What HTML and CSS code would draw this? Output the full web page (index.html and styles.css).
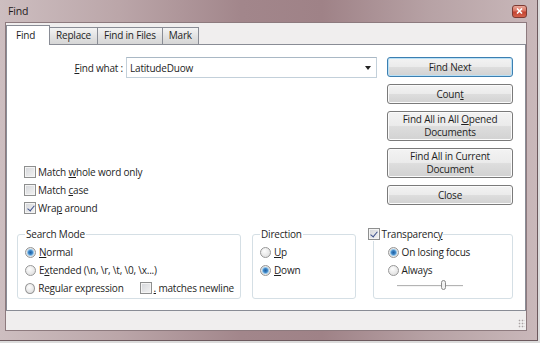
FILE: index.html
```html
<!DOCTYPE html>
<html lang="en">
<head>
  <meta charset="UTF-8">
  <title>Find</title>
  <link rel="stylesheet" href="styles.css">
</head>
<body>
  <div class="window">

    <!-- TITLE BAR -->
    <div class="titlebar">
      <span class="title">Find</span>
      <span class="close">
        <svg width="7" height="6" viewBox="0 0 7 6"><path d="M1 0.5 L6 5.5 M6 0.5 L1 5.5" stroke="#fff" stroke-width="1.6"/></svg>
      </span>
    </div>

    <div class="client">
      <!-- TABS -->
      <div class="tabs">
        <div class="tab active">Find</div>
        <div class="tab">Replace</div>
        <div class="tab">Find in Files</div>
        <div class="tab">Mark</div>
      </div>

      <div class="panel">
        <div class="top">
          <div class="main">
            <div class="find-row">
              <label class="find-label"><u>F</u>ind what :</label>
              <div class="combo"><span>LatitudeDuow</span><span class="arrow"></span></div>
            </div>
            <div class="options">
              <div class="check"><span class="box"></span><span>Match <u>w</u>hole word only</span></div>
              <div class="check"><span class="box"></span><span>Match <u>c</u>ase</span></div>
              <div class="check"><span class="box on"></span><span>Wra<u>p</u> around</span></div>
            </div>
          </div>
          <div class="buttons">
            <div class="btn default"><span>Find Next</span></div>
            <div class="btn"><span>Coun<u>t</u></span></div>
            <div class="btn tall"><span>Find All in All <u>O</u>pened<br>Documents</span></div>
            <div class="btn tall"><span>Find All in Current<br>Document</span></div>
            <div class="btn"><span>Close</span></div>
          </div>
        </div>

        <div class="groups">
          <fieldset class="group search-mode">
            <legend>Search Mode</legend>
            <div class="radio"><span class="dot on"></span><span><u>N</u>ormal</span></div>
            <div class="radio"><span class="dot"></span><span>E<u>x</u>tended (\n, \r, \t, \0, \x...)</span></div>
            <div class="radio">
              <span class="dot"></span><span>Re<u>g</u>ular expression</span>
              <span class="check newline"><span class="box"></span><span><u>.</u> matches newline</span></span>
            </div>
          </fieldset>

          <fieldset class="group direction">
            <legend>Direction</legend>
            <div class="radio"><span class="dot"></span><span><u>U</u>p</span></div>
            <div class="radio"><span class="dot on"></span><span><u>D</u>own</span></div>
          </fieldset>

          <fieldset class="group transparency">
            <legend><span class="check"><span class="box on"></span><span>Transparenc<u>y</u></span></span></legend>
            <div class="radio"><span class="dot on"></span><span>On losing focus</span></div>
            <div class="radio"><span class="dot"></span><span>Always</span></div>
            <div class="slider">
              <svg width="70" height="12" viewBox="0 0 70 12">
                <line x1="0" y1="6.5" x2="66" y2="6.5" stroke="#b4b4b4" stroke-width="1"/>
                <line x1="0" y1="7.5" x2="66" y2="7.5" stroke="#f4f4f4" stroke-width="1"/>
                <rect x="44.5" y="1.5" width="4" height="9" rx="2" fill="#f2f2f2" stroke="#8a8a8a"/>
              </svg>
            </div>
          </fieldset>
        </div>
      </div>

      <div class="statusbar"><span class="grip"></span></div>
    </div>
  </div>
</body>
</html>
```

FILE: styles.css
```css
* {
  margin: 0;
  padding: 0;
  box-sizing: border-box;
}
body {
  width: 540px;
  height: 343px;
  overflow: hidden;
  background: #dcdcdc;
  font-family: 'Open Sans', sans-serif;
  font-size: 10px;
  letter-spacing: -0.2px;
  color: #1e1e1e;
}
u {
  text-decoration: underline;
  text-underline-offset: 1px;
}

/* ===== WINDOW FRAME ===== */
.window {
  width: 538px;
  height: 341px;
  display: flex;
  flex-direction: column;
  padding: 0 10px 9px 5px;
  background: linear-gradient(90deg, #cdbec0 0%, #bba6a9 22%, #a2868b 45%, #9f8287 60%, #b7a2a5 80%, #c9b8ba 100%);
  border-right: 1px solid #6d5a5e;
  border-bottom: 1px solid #6d5a5e;
}
.titlebar {
  height: 22px;
  display: flex;
  align-items: center;
  justify-content: space-between;
  padding: 0 0 0 3px;
}
.title {
  font-size: 10.5px;
  color: #1f1a1b;
}
.close {
  width: 15px;
  height: 13px;
  display: flex;
  align-items: center;
  justify-content: center;
  border: 1px solid #7d3a33;
  border-radius: 3px;
  background: linear-gradient(#eaa99b 0%, #d9705f 45%, #c2412f 55%, #d4624c 100%);
}

/* ===== CLIENT AREA ===== */
.client {
  flex: 1;
  display: flex;
  flex-direction: column;
  background: #f0eeee;
  border: 1px solid #8d7a7e;
}
.tabs {
  height: 21px;
  display: flex;
  align-items: flex-end;
}
.tab {
  height: 17px;
  padding: 0 6px;
  line-height: 15px;
  border: 1px solid #898c95;
  border-bottom: none;
  border-left: none;
  background: linear-gradient(#f4f4f4, #e3e3e3 50%, #d6d6d6);
}
.tab.active {
  height: 20px;
  width: 44px;
  line-height: 18px;
  padding: 0 0 0 9px;
  margin-bottom: -1px;
  border-left: 1px solid #898c95;
  background: #fff;
  position: relative;
}
.panel {
  height: 267px;
  background: #fff;
  border: 1px solid #898c95;
  padding: 12px 12px 10px 10px;
  display: flex;
  flex-direction: column;
}
.statusbar {
  flex: 1;
  display: flex;
  justify-content: flex-end;
  align-items: flex-end;
  padding: 0 1px 2px 0;
}
.grip {
  width: 7px;
  height: 9px;
  background-image: radial-gradient(circle, #a9a3a4 0.7px, transparent 1.1px);
  background-size: 3px 3px;
}

/* ===== TOP SECTION ===== */
.top {
  height: 160px;
  display: flex;
  gap: 10px;
}
.main {
  flex: 1;
  display: flex;
  flex-direction: column;
  justify-content: space-between;
}
.find-row {
  height: 21px;
  display: flex;
  align-items: center;
  gap: 3px;
}
.find-label {
  width: 106px;
  text-align: right;
}
.combo {
  flex: 1;
  height: 21px;
  display: flex;
  align-items: center;
  justify-content: space-between;
  padding: 0 5px 0 3px;
  border: 1px solid #c3d0da;
  border-top-color: #a9b8c5;
}
.arrow {
  border-left: 3px solid transparent;
  border-right: 3px solid transparent;
  border-top: 4px solid #222;
}
.options {
  padding-left: 7px;
}
.check, .radio {
  height: 18px;
  display: flex;
  align-items: center;
  gap: 2px;
  white-space: nowrap;
}
.box {
  width: 12px;
  height: 12px;
  border: 1px solid #8e8f8f;
  background: linear-gradient(135deg, #d4d6da, #f3f3f3);
  box-shadow: inset 0 0 0 1px #f4f4f4;
  position: relative;
}
.box.on::after {
  content: '';
  position: absolute;
  left: 3.5px;
  top: 1px;
  width: 3px;
  height: 6px;
  border-right: 1.5px solid #3b4f8c;
  border-bottom: 1.5px solid #3b4f8c;
  transform: rotate(40deg);
}
.buttons {
  width: 126px;
  display: flex;
  flex-direction: column;
  gap: 7px;
}
.btn {
  height: 20px;
  display: flex;
  align-items: center;
  justify-content: center;
  text-align: center;
  line-height: 13px;
  border: 1px solid #7a7a7a;
  border-radius: 3px;
  background: linear-gradient(#f3f3f3 0%, #ebebeb 48%, #dddddd 52%, #d2d2d2 100%);
  box-shadow: inset 0 0 0 1px #fbfbfb;
}
.btn.tall {
  height: 30px;
}
.btn.default {
  border-color: #3c7fb1;
  box-shadow: inset 0 0 0 1px #b8e0f6;
}

/* ===== GROUP BOXES ===== */
.groups {
  margin-top: 10px;
  display: flex;
}
.group {
  height: 72px;
  min-width: 0;
  border: 1px solid #d5dfe5;
  border-radius: 3px;
  padding: 2px 6px 0 7px;
}
.group legend {
  height: 14px;
  line-height: 14px;
  padding: 0 1px;
}
.search-mode {
  width: 225px;
}
.direction {
  width: 104px;
  margin-left: 11px;
}
.transparency {
  width: 141px;
  margin-left: 17px;
  padding-left: 14px;
}
.transparency legend {
  margin-left: -20px;
  padding: 0;
}
.transparency legend .check {
  height: 14px;
}
.radio .dot {
  width: 11px;
  height: 11px;
  border-radius: 50%;
  border: 1px solid #979797;
  background: radial-gradient(circle at 40% 35%, #fdfdfd, #d8d8d8);
  margin-right: 1px;
}
.radio .dot.on {
  background: radial-gradient(circle, #1f5fa3 0, #3f86c6 2px, #8fc3e9 3px, #e8e8e8 4px, #d9d9d9 5px);
}
.newline {
  margin-left: 14px;
}
.slider {
  padding-left: 9px;
  height: 12px;
  display: flex;
  align-items: center;
}
```
